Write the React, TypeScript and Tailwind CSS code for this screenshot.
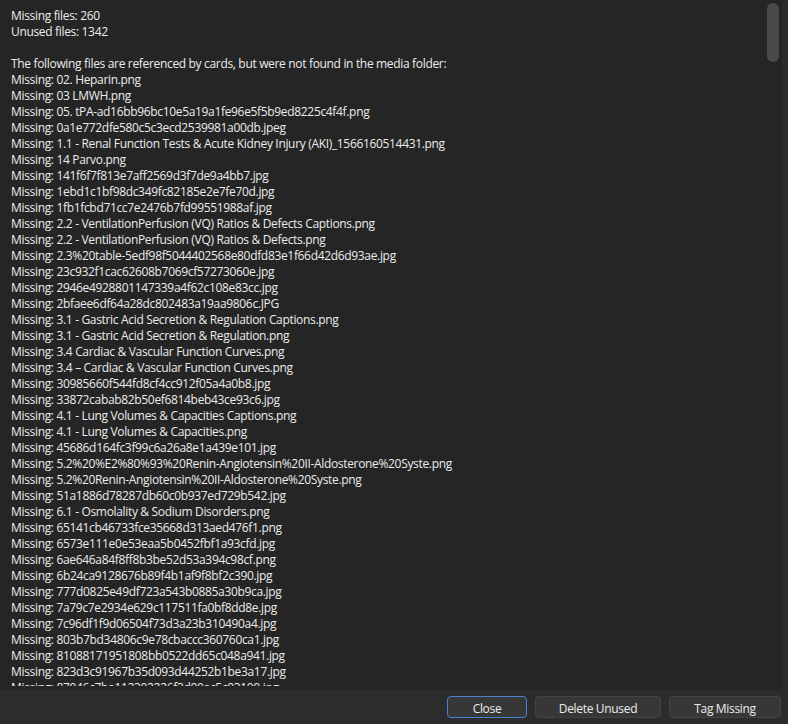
const lines = [
  'Missing files: 260',
  'Unused files: 1342',
  '',
  'The following files are referenced by cards, but were not found in the media folder:',
  'Missing: 02. Heparin.png',
  'Missing: 03 LMWH.png',
  'Missing: 05. tPA-ad16bb96bc10e5a19a1fe96e5f5b9ed8225c4f4f.png',
  'Missing: 0a1e772dfe580c5c3ecd2539981a00db.jpeg',
  'Missing: 1.1 - Renal Function Tests & Acute Kidney Injury (AKI)_1566160514431.png',
  'Missing: 14 Parvo.png',
  'Missing: 141f6f7f813e7aff2569d3f7de9a4bb7.jpg',
  'Missing: 1ebd1c1bf98dc349fc82185e2e7fe70d.jpg',
  'Missing: 1fb1fcbd71cc7e2476b7fd99551988af.jpg',
  'Missing: 2.2 - VentilationPerfusion (VQ) Ratios & Defects Captions.png',
  'Missing: 2.2 - VentilationPerfusion (VQ) Ratios & Defects.png',
  'Missing: 2.3%20table-5edf98f5044402568e80dfd83e1f66d42d6d93ae.jpg',
  'Missing: 23c932f1cac62608b7069cf57273060e.jpg',
  'Missing: 2946e4928801147339a4f62c108e83cc.jpg',
  'Missing: 2bfaee6df64a28dc802483a19aa9806c.JPG',
  'Missing: 3.1 - Gastric Acid Secretion & Regulation Captions.png',
  'Missing: 3.1 - Gastric Acid Secretion & Regulation.png',
  'Missing: 3.4 Cardiac & Vascular Function Curves.png',
  'Missing: 3.4 \u2013 Cardiac & Vascular Function Curves.png',
  'Missing: 30985660f544fd8cf4cc912f05a4a0b8.jpg',
  'Missing: 33872cabab82b50ef6814beb43ce93c6.jpg',
  'Missing: 4.1 - Lung Volumes & Capacities Captions.png',
  'Missing: 4.1 - Lung Volumes & Capacities.png',
  'Missing: 45686d164fc3f99c6a26a8e1a439e101.jpg',
  'Missing: 5.2%20%E2%80%93%20Renin-Angiotensin%20II-Aldosterone%20Syste.png',
  'Missing: 5.2%20Renin-Angiotensin%20II-Aldosterone%20Syste.png',
  'Missing: 51a1886d78287db60c0b937ed729b542.jpg',
  'Missing: 6.1 - Osmolality & Sodium Disorders.png',
  'Missing: 65141cb46733fce35668d313aed476f1.png',
  'Missing: 6573e111e0e53eaa5b0452fbf1a93cfd.jpg',
  'Missing: 6ae646a84f8ff8b3be52d53a394c98cf.png',
  'Missing: 6b24ca9128676b89f4b1af9f8bf2c390.jpg',
  'Missing: 777d0825e49df723a543b0885a30b9ca.jpg',
  'Missing: 7a79c7e2934e629c117511fa0bf8dd8e.jpg',
  'Missing: 7c96df1f9d06504f73d3a23b310490a4.jpg',
  'Missing: 803b7bd34806c9e78cbaccc360760ca1.jpg',
  'Missing: 81088171951808bb0522dd65c048a941.jpg',
  'Missing: 823d3c91967b35d093d44252b1be3a17.jpg',
  'Missing: 87946c7ba112302226f3d00ac5c03100.jpg',
];

export default function App() {
  return (
    <div className="flex h-[724px] w-[788px] flex-col bg-[#2c2c2c] font-['Open_Sans',sans-serif] text-[12px] tracking-[-0.33px] text-[#ececec]">
      {/* report text */}
      <div className="relative mr-[6px] flex-1 overflow-hidden rounded-b-[6px] bg-[#252525]">
        <div className="h-[686px] overflow-hidden pl-[11px] pt-[8px] leading-[16px] whitespace-pre">
          {lines.map((l, i) => (
            <div key={i} className="h-[16px]">{l}</div>
          ))}
        </div>
        <div className="absolute right-[3px] top-[3px] h-[59px] w-[12px] rounded-full bg-[#4a4a4a]" />
      </div>

      {/* buttons */}
      <div className="flex h-[34px] items-center justify-end gap-[8px] pr-[7px]">
        <button className="h-[22px] w-[80px] rounded-[4px] border border-[#4b7fd1] bg-[#373737] pt-[3px] leading-[16px] text-[#ececec]">
          Close
        </button>
        <button className="h-[22px] w-[126px] rounded-[4px] border border-[#434343] bg-[#373737] pt-[3px] leading-[16px] text-[#ececec]">
          Delete Unused
        </button>
        <button className="h-[22px] w-[112px] rounded-[4px] border border-[#434343] bg-[#373737] pt-[3px] leading-[16px] text-[#ececec]">
          Tag Missing
        </button>
      </div>
    </div>
  );
}
